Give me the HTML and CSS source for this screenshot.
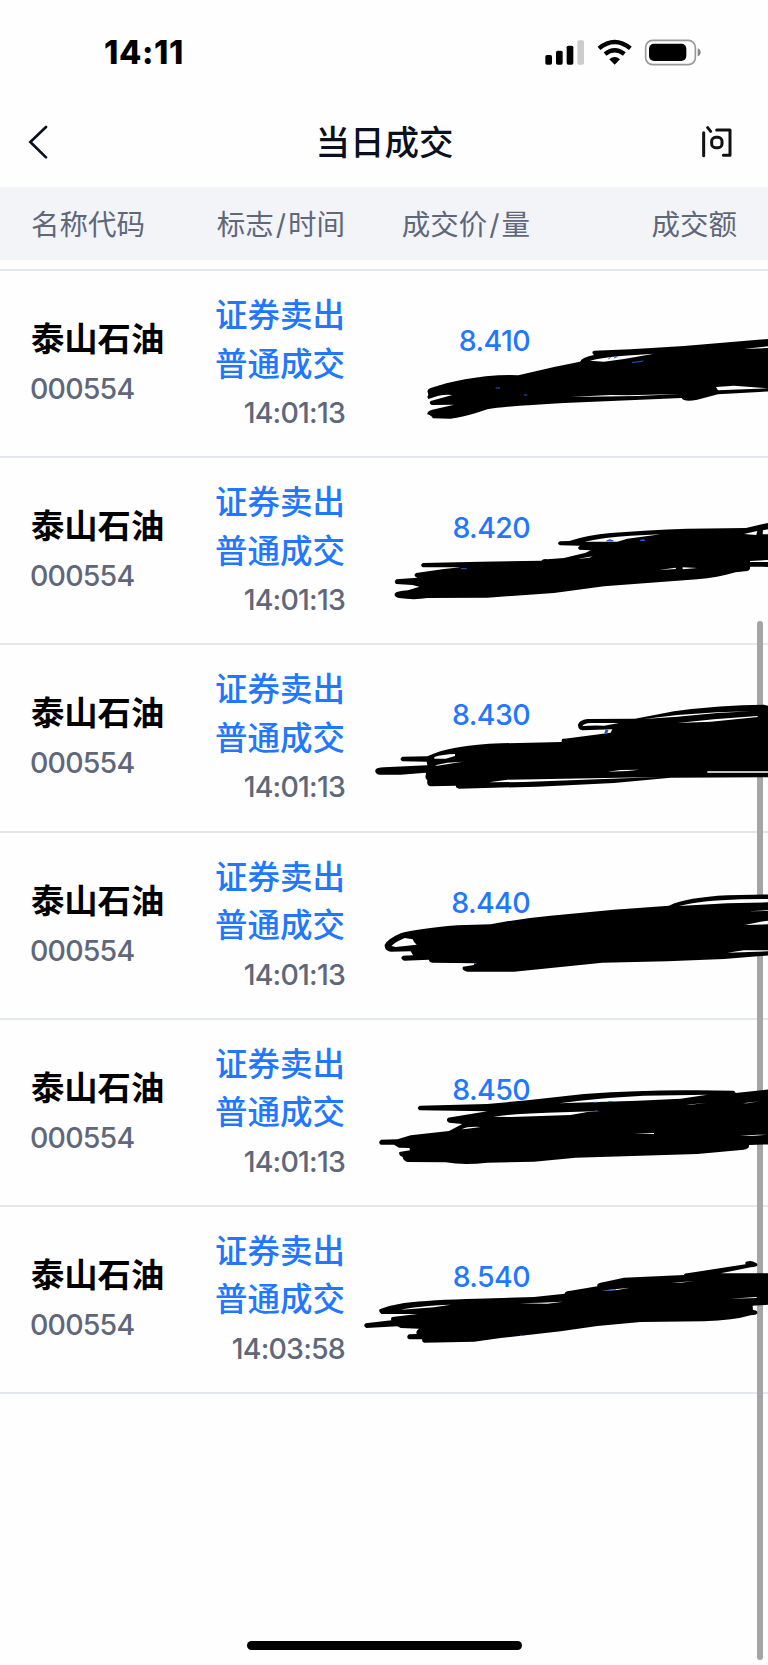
FILE: index.html
```html
<!DOCTYPE html>
<html lang="zh-CN">
<head>
    <meta charset="UTF-8">
    <meta name="viewport" content="width=device-width, initial-scale=1.0">
    <title>当日成交</title>
    <link rel="stylesheet" href="styles.css">
</head>
<body>
    <div class="status-bar">
        <span class="clock">14:11</span>
        <svg class="status-icons" width="158" height="28" viewBox="0 0 474 84">
            <rect x="1" y="51" width="20" height="29" rx="5"/>
            <rect x="33" y="38" width="20" height="42" rx="5"/>
            <rect x="65" y="23" width="20" height="57" rx="5"/>
            <rect x="97" y="7" width="20" height="73" rx="5" fill="#ccc"/>
            <g fill="none" stroke="#000" stroke-width="13">
                <path d="M162 31Q209-7 256 31"/>
                <path d="M180 48Q209 25 238 48"/>
            </g>
            <path d="M193 64Q209 50 225 64L209 80Z"/>
            <rect x="302" y="7" width="149" height="73" rx="21" fill="none" stroke="#999" stroke-width="5"/>
            <rect x="312" y="17" width="112" height="52" rx="15"/>
            <path d="M458 31Q467 34 467 43Q467 52 458 55Z" fill="#888"/>
        </svg>
    </div>

    <div class="nav-bar">
        <svg class="back" width="20" height="34" viewBox="0 0 60 102">
            <path d="M54 6L7 51L54 97" fill="none" stroke="#0b1020" stroke-width="8" stroke-linecap="round" stroke-linejoin="miter"/>
        </svg>
        <h1>当日成交</h1>
        <svg class="ask" width="32" height="34" viewBox="0 0 96 102">
            <g fill="none" stroke="#111" stroke-width="9" stroke-linecap="round" stroke-linejoin="round">
                <path d="M8 23V92M20 8L29 19M47 15H87V91H67"/>
                <rect x="32" y="37" width="31" height="31" rx="12"/>
            </g>
        </svg>
    </div>

    <div class="columns table-head">
        <span>名称代码</span>
        <span>标志<i>/</i>时间</span>
        <span>成交价<i>/</i>量</span>
        <span>成交额</span>
    </div>

    <div class="trades">
        <div class="columns trade">
            <div class="stock"><b>泰山石油</b><span class="sub">000554</span></div>
            <div class="type">证券卖出<br>普通成交<span class="sub">14:01:13</span></div>
            <div class="price">8.410</div>
            <svg class="scribble" viewBox="0 0 1212 562">
                <g transform="translate(0 88)">
                    <path class="fill" d="M190 272Q192 264 202 262L247 249Q300 236 365 228Q420 223 463 225L570 200L648 184Q655 170 690 164Q680 154 690 151L800 147L960 137L1220 115V273L1062 282L1000 298Q960 306 953 293L600 308Q430 317 370 327Q290 354 260 355L206 354Q204 346 190 342Q188 333 205 328L270 313L203 314Q193 309 200 302L265 284Q232 280 194 296Q187 291 193 283Z"/>
                    <path class="gap" d="M678 181Q710 172 780 166L870 160L780 176L720 184ZM1056 260L1110 256L1160 260L1212 264L1062 270ZM620 290L740 284L790 285L950 281L820 287ZM1140 146L1212 138V143Z"/>
                    <path class="blue" d="M733 176L740 171M750 173L760 169M804 187L838 182M395 263H408M480 284H490"/>
                </g>
            </svg>
        </div>
        <div class="columns trade">
            <div class="stock"><b>泰山石油</b><span class="sub">000554</span></div>
            <div class="type">证券卖出<br>普通成交<span class="sub">14:01:13</span></div>
            <div class="price">8.420</div>
            <svg class="scribble" viewBox="0 0 1212 562">
                <g transform="translate(0 97)">
                    <path class="fill" d="M177 218L350 214L532 211Q538 204 550 207L600 203L665 187L680 180L646 178Q638 171 648 166L588 165Q576 159 588 153L616 152Q670 134 740 128Q850 119 970 115L1146 113L1220 96V230L1158 229Q1160 240 1150 242L1115 246Q1060 262 1000 267L720 288L570 308L370 322L190 323Q150 330 105 323Q90 320 92 310Q97 302 132 300L166 289L145 284L96 281Q88 274 97 267L160 262Q145 257 156 248L240 236L290 231L176 231Q166 224 177 218Z"/>
                    <path class="gap" d="M662 154Q720 140 800 136L890 132L790 145L760 154ZM640 206L686 198L676 202ZM1140 131L1180 122L1177 134ZM1197 120L1212 117V132L1196 132ZM885 239L935 232L936 236ZM956 231L1000 233L956 237ZM1158 212L1212 209V215H1158Z"/>
                    <path class="blue" d="M728 152Q738 144 748 152ZM828 151Q835 146 843 150ZM291 235H308"/>
                </g>
            </svg>
        </div>
        <div class="columns trade">
            <div class="stock"><b>泰山石油</b><span class="sub">000554</span></div>
            <div class="type">证券卖出<br>普通成交<span class="sub">14:01:13</span></div>
            <div class="price">8.430</div>
            <svg class="scribble" viewBox="0 0 1212 562">
                <g transform="translate(0 105)">
                    <path class="fill" d="M190 229Q230 210 275 203Q340 192 410 190L593 186Q591 175 602 176L740 158L745 148L655 151Q641 148 642 134Q646 120 670 117L813 116L930 94Q1070 74 1200 74L1220 80V292L920 293L750 309L520 320L285 326Q273 323 276 317L200 319Q187 317 190 301Q181 294 186 283L185 278L110 284L45 284Q32 281 34 270Q38 263 60 262L190 256L188 245L115 244Q104 237 115 230Z"/>
                    <path class="gap" d="M655 138Q660 130 680 129L765 129L720 137Q680 136 655 138ZM211 231Q235 223 273 222L273 228L245 236H211ZM213 256L250 248L297 245L220 257ZM840 117L940 105L1060 97L1160 94L1060 99L940 110ZM940 129L1050 118L1180 108L1182 111L1040 125ZM375 307L430 299L890 291L720 297L480 306ZM730 275L770 270L826 269L790 273ZM1030 274H1212V278H1030Z"/>
                    <path class="blue wide" d="M725 161L729 149"/>
                </g>
            </svg>
        </div>
        <div class="columns trade">
            <div class="stock"><b>泰山石油</b><span class="sub">000554</span></div>
            <div class="type">证券卖出<br>普通成交<span class="sub">14:01:13</span></div>
            <div class="price">8.440</div>
            <svg class="scribble" viewBox="0 0 1212 562">
                <g transform="translate(0 113)">
                    <path class="fill" d="M62 222Q73 204 110 188Q160 174 280 164L380 161Q470 143 560 135L750 117L915 105Q970 80 1090 74L1220 71V254L1080 265L910 272L715 276L450 303L310 303Q291 298 297 288L330 283V278L205 276Q194 274 195 267L120 270Q105 263 117 255L147 254L140 242L80 243Q60 240 62 222Z"/>
                    <path class="gap" d="M82 226Q95 213 122 202L146 206Q149 216 158 222L95 229ZM945 106Q1010 90 1130 86L1212 85V95L1090 98ZM1142 163L1190 153L1212 150V161ZM1090 246L1140 239L1212 239V242ZM1150 122L1212 119V121Z"/>
                    <path class="blue" d="M330 279H337"/>
                </g>
            </svg>
        </div>
        <div class="columns trade">
            <div class="stock"><b>泰山石油</b><span class="sub">000554</span></div>
            <div class="type">证券卖出<br>普通成交<span class="sub">14:01:13</span></div>
            <div class="price">8.450</div>
            <svg class="scribble" viewBox="0 0 1212 562">
                <g transform="translate(0 122)">
                    <path class="fill" d="M167 135L370 130L490 119L660 100Q850 87 1000 89L1108 90Q1115 93 1115 97L1220 86V251L1155 253Q1158 263 1140 267L1000 280L635 291L510 303L370 306Q300 315 245 305L130 304Q117 300 116 289Q103 286 106 274L138 269L136 262L105 261L90 252L50 252Q40 245 51 237L100 236L140 224L255 211L295 190L255 186Q244 180 252 171L370 152L166 149Q156 142 167 135Z"/>
                    <path class="gap" d="M585 128Q690 113 840 105L1030 102L950 114L820 120ZM388 168Q440 160 550 156L710 151L670 154L620 163L440 169ZM293 206Q308 197 350 199L310 204ZM968 132L1030 126L980 132ZM1137 128L1186 122L1150 128ZM810 220L870 217V220ZM1128 226L1180 222H1212L1160 226Z"/>
                    <path class="blue" d="M688 125H700M733 123H747M692 151H701"/>
                </g>
            </svg>
        </div>
        <div class="columns trade">
            <div class="stock"><b>泰山石油</b><span class="sub">000554</span></div>
            <div class="type">证券卖出<br>普通成交<span class="sub">14:03:58</span></div>
            <div class="price">8.540</div>
            <svg class="scribble" viewBox="0 0 1212 562">
                <g transform="translate(-30 100)">
                    <path class="fill" d="M77 207Q110 194 150 188Q230 178 370 175L540 170L632 160Q632 152 650 151L730 138Q728 129 740 127L810 112L990 104Q990 98 1005 98L1175 72Q1170 62 1190 62Q1212 67 1210 74Q1210 80 1190 81L1100 99L1250 99V193L1196 196L1197 209Q1212 210 1210 219Q1208 225 1190 225Q1140 240 1050 243L860 245L730 257L620 273L440 293L360 304L210 307Q202 304 205 297L165 297Q154 290 165 282L188 281Q184 271 195 265L140 263L130 258L37 263Q25 256 35 249L112 240Q108 229 120 229L190 221L82 221Q72 214 77 207Z"/>
                    <path class="gap" d="M142 208Q190 197 290 193L240 201ZM496 189L560 187L627 184L580 190ZM740 151L790 146L828 142L790 149ZM952 128L1020 122L980 127ZM1130 175L1207 170L1209 173Z"/>
                    <path class="blue" d="M754 151L785 148M498 285H508"/>
                </g>
            </svg>
        </div>
    </div>

    <div class="scrollbar"></div>
    <div class="home-indicator"></div>
</body>
</html>
```

FILE: styles.css
```css
* {
    box-sizing: border-box;
}
body {
    margin: 0;
    height: 1665px;
    position: relative;
    overflow: hidden;
    display: flex;
    flex-direction: column;
    background: #fefefe;
    font-family: Inter, "Noto Sans CJK SC", sans-serif;
    color: #000;
}
.status-bar {
    height: 100px;
    padding: 4px 65px 0 104px;
    display: flex;
    justify-content: space-between;
    align-items: center;
}
.clock {
    font-size: 32.5px;
    font-weight: 800;
    letter-spacing: 0.6px;
}
.status-icons {
    margin-top: -1px;
}
.nav-bar {
    height: 87px;
    padding: 0 35px 4px 28px;
    display: grid;
    grid-template-columns: 1fr auto 1fr;
    align-items: center;
}
.nav-bar h1 {
    margin: 2px 0 0 8px;
    font-size: 34.5px;
    font-weight: 500;
    line-height: 50px;
    color: #0b1020;
}
.ask {
    justify-self: end;
}
.columns {
    display: grid;
    grid-template-columns: 160px 154px 185px 207px;
    padding: 0 31px;
    text-align: right;
}
.columns > :first-child {
    text-align: left;
}
.table-head {
    height: 73px;
    line-height: 76px;
    background: #f2f4f8;
    color: #5f677a;
    font-size: 28.5px;
}
.table-head i {
    padding: 0 2px;
    font-style: normal;
}
.trades {
    margin-top: 9px;
    border-top: 2px solid #e4e7ec;
}
.trade {
    height: 187.2px;
    position: relative;
    border-bottom: 2px solid #e4e7ec;
}
.stock {
    padding-top: 44px;
}
.stock b {
    display: block;
    font-size: 33.3px;
    font-weight: 700;
    line-height: 49px;
}
.sub {
    display: block;
    font-size: 28.5px;
    font-weight: 450;
    line-height: 49px;
    letter-spacing: -0.8px;
    color: #5f677a;
}
.stock .sub {
    margin-left: -1px;
}
.type {
    padding-top: 21px;
    font-size: 32.5px;
    font-weight: 500;
    line-height: 48.5px;
    color: #2277ff;
}
.type .sub {
    line-height: 48px;
}
.price {
    padding-top: 45px;
    font-size: 28.5px;
    font-weight: 450;
    line-height: 49px;
    letter-spacing: -0.6px;
    color: #2277ff;
}
/* pen strokes over the amounts */
.scribble {
    position: absolute;
    left: 364px;
    top: 0;
    width: 404px;
    height: 187.3px;
    z-index: 2;
}
.fill {
    fill: #000;
}
.gap {
    fill: #fefefe;
}
.blue {
    fill: #1d5fd0;
    stroke: #1d5fd0;
    stroke-width: 3;
}
.wide {
    stroke-width: 9;
}
.scrollbar {
    position: absolute;
    z-index: 1;
    left: 757px;
    top: 621px;
    width: 6px;
    height: 1039px;
    border-radius: 3px;
    background: #a5a5a5;
}
.home-indicator {
    width: 275px;
    height: 9px;
    margin: auto auto 15px 246.5px;
    flex-shrink: 0;
    border-radius: 5px;
    background: #000;
}
```
